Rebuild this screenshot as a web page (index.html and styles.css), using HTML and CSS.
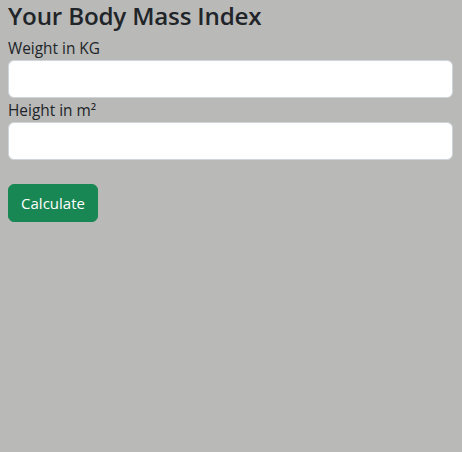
FILE: index.html
```html
<!DOCTYPE html>
<html>
<head>
<meta charset="utf-8">
<link rel="stylesheet" href="styles.css">
</head>
<body>
<div class="page">
  <h1 class="title">Your Body Mass Index</h1>
  <form class="bmi-form">
    <label class="form-label" for="weight">Weight in KG</label>
    <input class="form-control" id="weight" type="text">
    <label class="form-label" for="height">Height in m²</label>
    <input class="form-control" id="height" type="text">
    <button class="btn-calc" type="button">Calculate</button>
  </form>
</div>
</body>
</html>
```
FILE: styles.css
```css
html, body {
  margin: 0;
  padding: 0;
  background: #b9b9b7;
}
body {
  font-family: "Open Sans", "Noto Sans", sans-serif;
  color: #212529;
  font-size: 15.4px;
  line-height: 1.5;
}
.page {
  padding: 0 9px 0 8px;
}
.title {
  margin: 0 0 8px 0;
  font-size: 24.2px;
  font-weight: 600;
  line-height: 1.2;
  letter-spacing: -0.2px;
  padding-top: 1px;
}
.bmi-form {
  display: flex;
  flex-direction: column;
  align-items: flex-start;
}
.form-label {
  display: block;
  height: 22px;
  line-height: 22px;
  margin-bottom: 0;
}
.form-control {
  box-sizing: border-box;
  width: 100%;
  height: 38px;
  border: 1px solid #ced4da;
  border-radius: 6px;
  background: #fff;
  margin: 0 0 2px 0;
  padding: 6px 12px;
  font: inherit;
}
.btn-calc {
  margin-top: 22px;
  box-sizing: border-box;
  width: 90px;
  height: 38px;
  border: 1px solid #198754;
  border-radius: 6px;
  background: #198754;
  color: #fff;
  font: inherit;
  font-size: 15px;
  padding: 0;
}
```
